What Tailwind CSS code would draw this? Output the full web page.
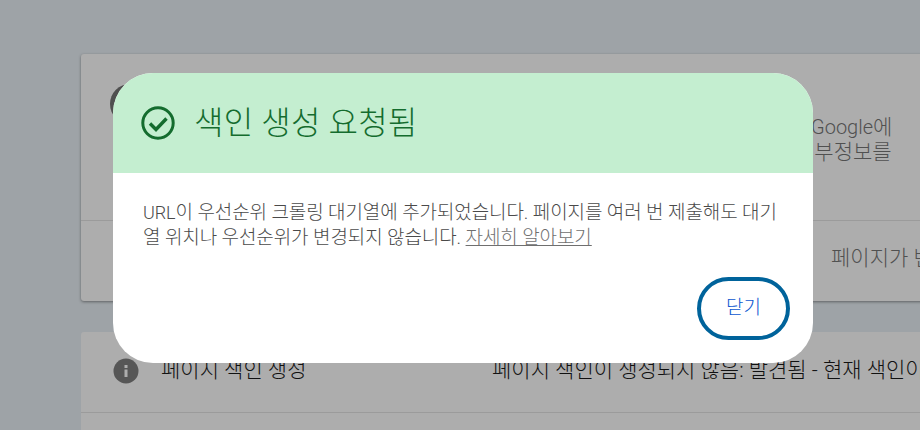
<!DOCTYPE html>
<html lang="ko">
<head>
  <meta charset="utf-8">
  <title>색인 생성 요청됨</title>
  <script src="https://cdn.jsdelivr.net/npm/@tailwindcss/browser@4"></script>
</head>
<body class="relative w-[920px] h-[430px] overflow-hidden bg-[#9ea3a7] font-['Roboto','Noto_Sans_CJK_KR',sans-serif]">

  <!-- page behind the dialog -->
  <div class="w-[920px] pl-[81px] pt-[54px] flex flex-col gap-[31px]">
    <div class="h-[247px] w-[860px] bg-[#adadad] rounded-[3px] shadow-[0_1px_3px_rgba(0,0,0,0.4)] flex flex-col">
      <div class="h-[167px] border-b border-[#9b9b9b] flex">
        <div class="w-[40px] h-[40px] mt-[30px] ml-[29px] rounded-full bg-[#4f4f4f]"></div>
        <div class="ml-[660px] mt-[61px] text-[21px] font-light leading-[25px] text-[#505050] whitespace-nowrap">
          <div class="pl-[1px]"><span class="text-[20px] font-light">Google</span>에</div>
          <div class="ml-[-15px]">세부정보를</div>
        </div>
      </div>
      <div class="pl-[750px] pt-[23px] text-[21px] font-light leading-[28px] text-[#505050] whitespace-nowrap overflow-hidden">페이지가 변경</div>
    </div>
    <div class="h-[100px] w-[860px] bg-[#adadad] rounded-t-[3px] flex flex-col">
      <div class="h-[81px] border-b border-[#9b9b9b] flex items-center pl-[32px] pb-[3px] whitespace-nowrap overflow-hidden text-[21px] font-light text-[#111111]">
        <svg class="w-[26px] h-[26px] shrink-0" viewBox="0 0 26 26"><circle cx="13" cy="13" r="12.5" fill="#565656"/><rect x="11.5" y="11.5" width="3" height="7.5" fill="#adadad"/><rect x="11.5" y="7" width="3" height="3" fill="#adadad"/></svg>
        <span class="ml-[22px] w-[331px] shrink-0">페이지 색인 생성</span>
        <span>페이지 색인이 생성되지 않음: 발견됨 - 현재 색인이 생성되지 않음</span>
      </div>
    </div>
  </div>

  <!-- dialog -->
  <div class="absolute left-[113px] top-[73px] w-[700px] h-[290px] bg-white rounded-[40px] overflow-hidden flex flex-col">
    <div class="h-[100px] bg-[#c4eed0] flex items-center pl-[28px] gap-[19px] text-[#146c2e]">
      <svg class="w-[34px] h-[34px]" viewBox="0 0 34 34" fill="none" stroke="#146c2e"><circle cx="17" cy="17" r="15.2" stroke-width="3"/><path d="M9 17.5l6 6L25.5 12.5" stroke-width="3.4"/></svg>
      <h1 class="text-[32px] font-light leading-[36px] tracking-[0.2px]">색인 생성 요청됨</h1>
    </div>
    <p class="mx-[30px] mt-[27px] text-[19px] font-light leading-[25px] text-[#4a4a4a] tracking-[-0.1px]"><span class="text-[18px]">URL</span>이 우선순위 크롤링 대기열에 추가되었습니다. 페이지를 여러 번 제출해도 대기열 위치나 우선순위가 변경되지 않습니다. <a href="#" class="underline text-[#6f6f6f]">자세히 알아보기</a></p>
    <div class="flex justify-end mt-[27px] mr-[23px]">
      <button class="w-[93px] h-[63px] rounded-full border-[4px] border-[#00639b] text-[19px] font-light text-[#0b57d0]">닫기</button>
    </div>
  </div>

</body>
</html>
